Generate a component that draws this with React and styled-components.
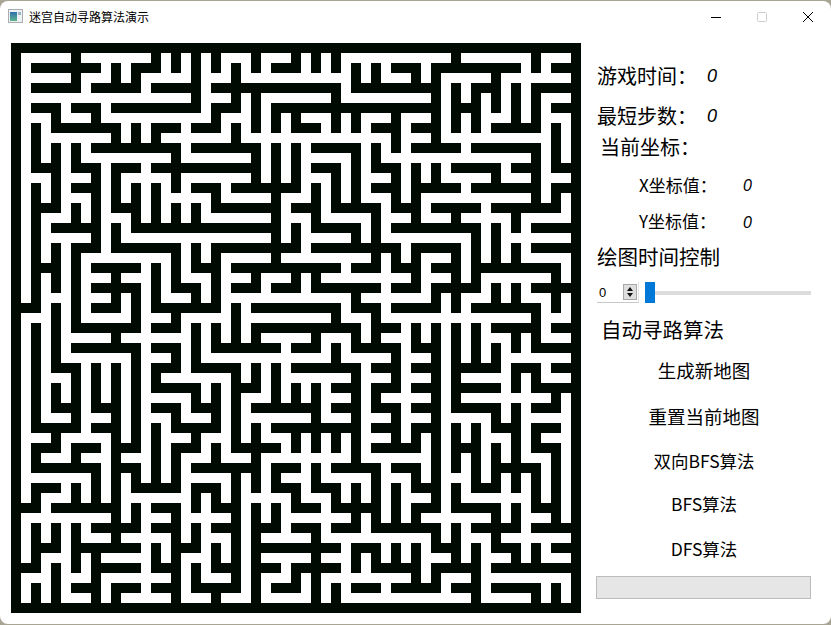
import React from 'react';
import styled, { createGlobalStyle } from 'styled-components';

const GlobalStyle = createGlobalStyle`
  html, body {
    margin: 0;
    padding: 0;
    height: 625px;
    overflow: hidden;
    background: #a8a595;
  }
`;

const cjk = `"Noto Sans CJK SC", "Liberation Sans", sans-serif`;

const Win = styled.div`
  width: 831px;
  height: 623px;
  margin-top: 1px;
  background: #fff;
  border-radius: 8px;
  display: flex;
  flex-direction: column;
  font-family: ${cjk};
  color: #000;
`;

const TitleBar = styled.div`
  height: 31px;
  display: flex;
  align-items: center;
  padding-left: 8px;
  font-size: 12px;
`;

const TitleText = styled.span`
  margin-left: 6px;
  flex: 1;
`;

const WinButton = styled.div`
  width: 46px;
  height: 31px;
  display: flex;
  align-items: center;
  justify-content: center;
`;

const Main = styled.div`
  display: flex;
  padding: 11px 0 0 11px;
  gap: 15px;
`;

const Board = styled.svg`
  display: block;
  flex: none;
`;

// row tracks follow the spacing of the Qt form, it is not regular
const Side = styled.div`
  width: 215px;
  padding-top: 13px;
  display: grid;
  grid-template-rows: 40px 40px 22px 54px 20px 50px 21px 54px 28px 65px 24px 62px 28px 12px 23px;
`;

const InfoRow = styled.div`
  display: flex;
  align-items: center;
  padding-left: ${(p) => p.$indent || 1}px;
  font-size: ${(p) => p.$size || 20}px;
  line-height: 1;
  white-space: nowrap;
`;

const InfoLabel = styled.span`
  width: ${(p) => p.$width}px;
  padding-bottom: ${(p) => p.$lift || 0}px;
`;

const Value = styled.span`
  font-family: "Liberation Sans", sans-serif;
  font-style: italic;
  font-size: ${(p) => p.$size || 18}px;
  padding-top: ${(p) => p.$drop || 0}px;
`;

const Heading = styled.div`
  display: flex;
  align-items: center;
  padding: 0 0 2px ${(p) => p.$indent || 1}px;
  font-size: 20.5px;
  line-height: 1;
  white-space: nowrap;
`;

const ActionBtn = styled.div`
  display: flex;
  align-items: center;
  justify-content: center;
  padding: 0 0 2px 1px;
  font-size: ${(p) => p.$size || 18.5}px;
  line-height: 1;
  white-space: nowrap;
`;

const TimeRow = styled.div`
  display: flex;
  align-items: stretch;
  padding-left: 1px;
  gap: 6px;
`;

const Spin = styled.div`
  width: 42px;
  box-sizing: border-box;
  border-bottom: 1px solid #c8c8c8;
  border-right: 1px solid #e4e4e4;
  display: flex;
  align-items: center;
  justify-content: space-between;
  padding: 0 1px 0 2px;
  font-family: "Liberation Sans", sans-serif;
  font-size: 13px;
`;

const SpinArrows = styled.div`
  width: 14px;
  height: 16px;
  background: #dedede;
  border: 1px solid #a8a8a8;
  box-sizing: border-box;
  display: flex;
  flex-direction: column;
  align-items: center;
  justify-content: center;
  gap: 2px;
`;

const Arrow = styled.div`
  width: 0;
  height: 0;
  border-left: 3.5px solid transparent;
  border-right: 3.5px solid transparent;
  ${(p) => (p.$down ? 'border-top: 4px solid #111;' : 'border-bottom: 4px solid #111;')}
`;

const Slider = styled.div`
  flex: 1;
  display: flex;
  align-items: center;
`;

const Handle = styled.div`
  width: 10px;
  height: 21px;
  background: #0078d7;
`;

const Track = styled.div`
  flex: 1;
  height: 4px;
  background: #dcdcdc;
`;

const Progress = styled.div`
  grid-row: 15;
  box-sizing: border-box;
  height: 23px;
  background: #e6e6e6;
  border: 1px solid #bcbcbc;
`;

const MAZE = [
  '0-56',
  '0 6 14 16 18 20 24 28 30 32 44 52 56',
  '0 2-8 10 12-14 16 18 20 22 24 26-28 30 32 34 36 38-40 42-50 52 54-56',
  '0 6 10 12 18 22 34 36 40 42 48 56',
  '0 2-6 8-12 14-18 20-32 34-42 44 46-48 50 52-56',
  '0 18 22 24 32 42 44 46 48 50 52 56',
  '0 2-4 6-8 10-18 20-22 24 26-42 44-46 48 50 52 54-56',
  '0 4 8 20 24 26 28 32 34 38 42 44 46 50 52 56',
  '0 2 4-10 12 14-16 18-20 22 24 26 28-30 32 34 36-38 40-42 44 46 48-52 54 56',
  '0 2 10 12 14 22 38 42 54 56',
  '0 2 4 6 8-16 18-24 26 28 30-34 36 38 40-44 46-52 54 56',
  '0 2 4 6 16 24 26 28 34 36 52 54 56',
  '0 2-4 6-8 10-12 14-24 26 28 30-32 34 36-38 40 42 44-48 50-52 54-56',
  '0 4 8 10 16 24 26 28 32 34 38 40 42 48 52 56',
  '0 2 4 6-8 10 12 14 16 18-20 22-28 30 32 34 36-38 40-44 46-52 54-56',
  '0 2 4 8 10 12 14 20 26 30 32 34 38 40 52 54 56',
  '0 2-4 6 8 10-12 14 16 18 20-26 28-30 32-36 38-40 42-46 48-54 56',
  '0 2 6 8 12 14 16 18 26 30 36 40 44 50 56',
  '0 2 4-8 10 12-26 28 30-34 36 38-46 48 50 52-56',
  '0 2 8 10 26 28 34 36 46 48 56',
  '0 2 4 6-8 10-16 18 20-28 30-38 40-44 46 48 50 52-56',
  '0 2 4 6 16 18 20 26 36 38 40 44 46 48 50 56',
  '0 2-4 6 8-12 14 16 18-20 22-32 34-36 38-40 42-44 46-54 56',
  '0 2 4 6 10 14 16 20 24 28 30 40 44 46 54 56',
  '0 2 4 6 8-12 14 16-18 20 22-24 26-28 30-36 38-40 42-46 48 50 52-56',
  '0 2 6 10 12 14 18 20 34 42 44 48 50 54 56',
  '0-2 4 6 8-10 12 14-20 22 24-32 34-36 38-42 44 46-52 54 56',
  '0 4 6 12 16 22 32 36 52 56',
  '0 2 4 6-12 14-16 18 20 22 24-34 36-38 40 42 44 46 48-52 54-56',
  '0 2 4 10 18 20 22 24 30 34 36 40 42 44 46 50 52 56',
  '0 2 4 6-12 14-16 18 20-26 28-30 32 34-38 40-42 44 46 48 50 52-56',
  '0 2 4 12 16 18 32 38 42 44 46 48 56',
  '0 2 4-6 8 10 12 14-16 18-22 24 26 28-34 36-38 40-42 44-48 50-52 54-56',
  '0 2 6 8 10 12 14 22 24 26 34 38 42 44 50 52 56',
  '0 2 4 6 8 10 12 14-18 20 22-24 26 28 30 32-34 36-38 40-42 44-48 50 52-56',
  '0 2 4 6 8 10 12 18 20 22 26 28 30 34 36 42 44 54 56',
  '0 2 4-6 8-10 12 14-16 18-20 22 24-30 32-34 36-38 40-42 44-48 50 52-54 56',
  '0 2 6 10 12 16 20 22 30 34 38 42 48 50 56',
  '0 2-6 8-10 12 14 16-20 22 24 26-34 36-38 40-42 44 46 48-50 52-54 56',
  '0 4 10 12 14 18 22 24 28 30 32 34 38 40 42 44 46 50 52 56',
  '0 2-4 6-8 10-12 14 16-18 20 22-26 28 30 32 34 36-40 42 44-46 48 50 52-54 56',
  '0 2 6 10 14 16 20 24 34 42 44 46 48 50 54 56',
  '0 2-8 10-12 14 16 18-24 26-28 30 32-36 38-40 42 44 46 48-52 54 56',
  '0 8 10 12 14 16 22 24 26 30 36 40 42 46 48 50 52 54 56',
  '0 2-4 6 8 10 12-16 18-20 22 24 26-28 30-32 34 36 38 40-42 44 46-48 50 52 54 56',
  '0 2 6 8 10 18 20 22 28 32 34 36 38 42 44 52 54 56',
  '0-2 4-10 12 14-16 18 20-22 24 26 28-30 32-36 38 40-42 44-48 50 52-54 56',
  '0 10 12 16 22 24 26 34 36 38 40 48 50 54 56',
  '0 2 4 6 8-12 14-16 18 20-22 24-26 28-30 32-34 36-42 44 46-50 52-56',
  '0 2 4 6 10 16 18 22 24 30 42 44 48 56',
  '0 2-4 6-12 14 16-18 20 22 24-32 34-36 38 40 42-44 46 48-50 52 54-56',
  '0 2 6 8 14 16 20 22 24 30 34 36 38 40 44 46 50 52 56',
  '0-2 4 6 8-12 14-16 18 20-22 24-26 28-32 34 36-40 42-46 48-56',
  '0 4 8 16 18 22 24 28 30 40 42 46 56',
  '0 2 4 6-8 10-12 14-16 18-22 24 26-28 30 32 34-36 38-42 44-46 48-52 54 56',
  '0 2 4 8 10 16 20 24 30 32 46 52 54 56',
  '0-56',
];

const CELL = 10;

function mazePath() {
  let d = '';
  MAZE.forEach((row, y) => {
    row.split(' ').forEach((run) => {
      const [a, b] = run.split('-').map(Number);
      const w = ((b === undefined ? a : b) - a + 1) * CELL;
      d += `M${a * CELL} ${y * CELL}h${w}v${CELL}h${-w}z`;
    });
  });
  return d;
}

function Maze() {
  return (
    <Board width="570" height="570" viewBox="0 0 570 570" shapeRendering="crispEdges">
      <rect width="570" height="570" fill="#fff" />
      <path d={mazePath()} fill="#010a02" />
    </Board>
  );
}

function AppIcon() {
  return (
    <svg width="15" height="15" viewBox="0 0 15 15">
      <defs>
        <linearGradient id="ico" x1="0" y1="0" x2="0" y2="1">
          <stop offset="0" stopColor="#2f6fb0" />
          <stop offset="1" stopColor="#5fb58a" />
        </linearGradient>
      </defs>
      <rect x="0.5" y="0.5" width="14" height="13" fill="#eef1f3" stroke="#a9adb2" />
      <rect x="2" y="3" width="7" height="9" fill="url(#ico)" />
      <rect x="10" y="3" width="3" height="3" fill="#9fb6c4" />
    </svg>
  );
}

export default function App() {
  return (
    <>
      <GlobalStyle />
      <Win>
        <TitleBar>
          <AppIcon />
          <TitleText>迷宫自动寻路算法演示</TitleText>
          <WinButton>
            <svg width="10" height="10" viewBox="0 0 10 10">
              <path d="M0 5.5h10" stroke="#000" fill="none" />
            </svg>
          </WinButton>
          <WinButton>
            <svg width="10" height="10" viewBox="0 0 10 10">
              <rect x="0.5" y="0.5" width="9" height="9" rx="1" fill="none" stroke="#ccc" />
            </svg>
          </WinButton>
          <WinButton>
            <svg width="10" height="10" viewBox="0 0 10 10">
              <path d="M0 0L10 10M10 0L0 10" stroke="#000" fill="none" />
            </svg>
          </WinButton>
        </TitleBar>
        <Main>
          <Maze />
          <Side>
            <InfoRow>
              <InfoLabel $width={110}>游戏时间：</InfoLabel>
              <Value>0</Value>
            </InfoRow>
            <InfoRow>
              <InfoLabel $width={110}>最短步数：</InfoLabel>
              <Value>0</Value>
            </InfoRow>
            <InfoRow $indent={4}>当前坐标：</InfoRow>
            <InfoRow $indent={43} $size={17}>
              <InfoLabel $width={104} $lift={2}>X坐标值：</InfoLabel>
              <Value $size={16} $drop={1}>0</Value>
            </InfoRow>
            <InfoRow $indent={43} $size={17}>
              <InfoLabel $width={104} $lift={3}>Y坐标值：</InfoLabel>
              <Value $size={16} $drop={1}>0</Value>
            </InfoRow>
            <Heading>绘图时间控制</Heading>
            <TimeRow>
              <Spin>
                0
                <SpinArrows>
                  <Arrow />
                  <Arrow $down />
                </SpinArrows>
              </Spin>
              <Slider>
                <Handle />
                <Track />
              </Slider>
            </TimeRow>
            <Heading $indent={5}>自动寻路算法</Heading>
            <ActionBtn>生成新地图</ActionBtn>
            <ActionBtn>重置当前地图</ActionBtn>
            <ActionBtn $size={17.5}>双向BFS算法</ActionBtn>
            <ActionBtn $size={17.5}>BFS算法</ActionBtn>
            <ActionBtn $size={17.5}>DFS算法</ActionBtn>
            <Progress />
          </Side>
        </Main>
      </Win>
    </>
  );
}
